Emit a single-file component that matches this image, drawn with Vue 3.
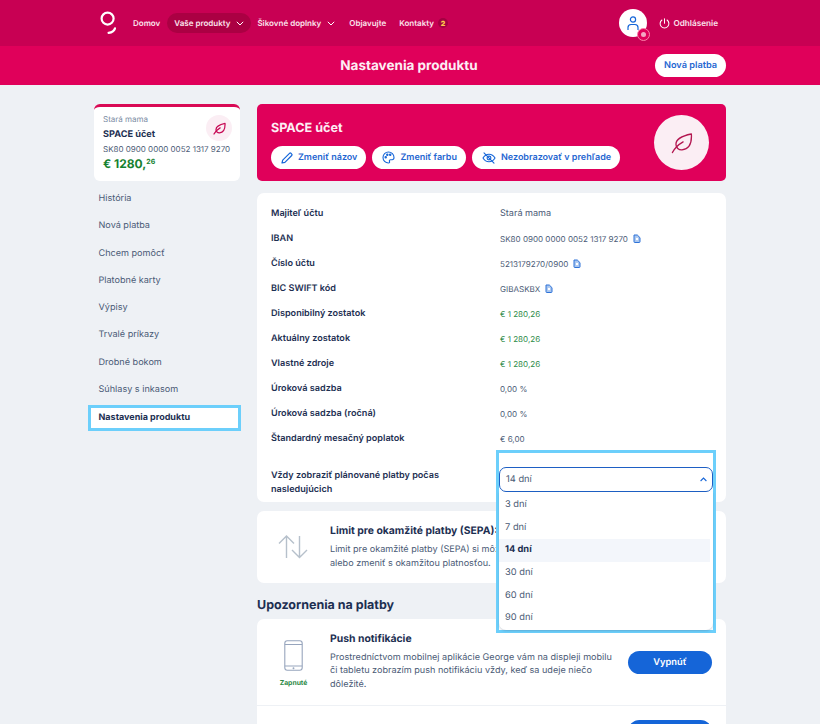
<script setup>
const nav = ['História','Nová platba','Chcem pomôcť','Platobné karty','Výpisy','Trvalé príkazy','Drobné bokom','Súhlasy s inkasom']
const details = [
  { label: 'Majiteľ účtu', value: 'Stará mama', kind: 'owner' },
  { label: 'IBAN', value: 'SK80 0900 0000 0052 1317 9270', copy: true },
  { label: 'Číslo účtu', value: '5213179270/0900', copy: true },
  { label: 'BIC SWIFT kód', value: 'GIBASKBX', copy: true },
  { label: 'Disponibilný zostatok', value: '€ 1 280,26', kind: 'green' },
  { label: 'Aktuálny zostatok', value: '€ 1 280,26', kind: 'green' },
  { label: 'Vlastné zdroje', value: '€ 1 280,26', kind: 'green' },
  { label: 'Úroková sadzba', value: '0,00 %' },
  { label: 'Úroková sadzba (ročná)', value: '0,00 %' },
  { label: 'Štandardný mesačný poplatok', value: '€ 6,00' }
]
const options = ['3 dní','7 dní','14 dní','30 dní','60 dní','90 dní']
</script>

<template>
  <div class="page">
    <header class="topbar">
      <div class="wrap topbar-in">
        <svg class="logo" width="16" height="24" viewBox="0 0 16 24" fill="none" stroke="#fff" stroke-width="2.200">
          <circle cx="7.600" cy="7.600" r="6"/>
          <path d="M15 17.400c-.7 2.400-3 3.900-6.400 4.500" stroke-linecap="round"/>
        </svg>
        <nav class="mainnav">
          <span class="mi home">Domov</span>
          <span class="mi active">Vaše produkty
            <svg width="8" height="5" viewBox="0 0 8 5" fill="none" stroke="#fff" stroke-width="1"><path d="M.8.8 4 4l3.200-3.200"/></svg>
          </span>
          <span class="mi tools">Šikovné doplnky
            <svg width="8" height="5" viewBox="0 0 8 5" fill="none" stroke="#fff" stroke-width="1"><path d="M.8.8 4 4l3.200-3.200"/></svg>
          </span>
          <span class="mi explore">Objavujte</span>
          <span class="mi">Kontakty <b class="count">2</b></span>
        </nav>
        <div class="avatar">
          <svg width="12" height="15" viewBox="0 0 12 15" fill="none" stroke="#1565d8" stroke-width="1.200"><circle cx="6" cy="3.500" r="2.600"/><path d="M1 14v-2.400C1 9.800 2.300 8.500 4 8.500h4c1.700 0 3 1.300 3 3.100V14"/></svg>
          <span class="avatar-badge"><span class="avatar-dot"></span></span>
        </div>
        <span class="logout">
          <svg width="11" height="11" viewBox="0 0 12 12" fill="none" stroke="#fff" stroke-width="1.100" stroke-linecap="round"><path d="M6 .8v5"/><path d="M3.200 2.200a4.800 4.800 0 1 0 5.600 0"/></svg>
          Odhlásenie
        </span>
      </div>
    </header>

    <div class="titlebar">
      <div class="wrap titlebar-in">
        <h1>Nastavenia produktu</h1>
        <button class="pill new-pay">Nová platba</button>
      </div>
    </div>

    <div class="wrap content">
      <aside class="side">
        <div class="acct">
          <div class="acct-owner">Stará mama</div>
          <div class="acct-name">SPACE účet</div>
          <div class="acct-iban">SK80 0900 0000 0052 1317 9270</div>
          <div class="acct-bal">€ 1280,<sup>26</sup></div>
          <span class="acct-icon">
            <svg width="13" height="13" viewBox="0 0 20 20" fill="none" stroke="#c70a55" stroke-width="1.900" stroke-linecap="round" stroke-linejoin="round"><path d="M18.500 2.200C18.800 9 17 16 10 16.600c-3 .2-5.400-1.800-5.400-5 0-6 8-8 13.900-9.400Z"/><path d="M1.500 18.500c2-4 5-7 9.500-9.500"/></svg>
          </span>
        </div>
        <ul class="sidenav">
          <li v-for="n in nav" :key="n">{{ n }}</li>
          <li class="current">Nastavenia produktu</li>
        </ul>
      </aside>

      <main class="main">
        <section class="hero">
          <div class="hero-left">
            <h2>SPACE účet</h2>
            <div class="hero-btns">
              <button class="pill hb">
                <svg width="12" height="12" viewBox="0 0 12 12" fill="none" stroke="#1565d8" stroke-width="1.200" stroke-linejoin="round"><path d="M1 11l.7-2.900L8.500 1.300a1 1 0 0 1 1.400 0l.8.8a1 1 0 0 1 0 1.400L3.900 10.300 1 11Z"/></svg>
                Zmeniť názov
              </button>
              <button class="pill hb">
                <svg width="13" height="13" viewBox="0 0 13 13" fill="none" stroke="#1565d8" stroke-width="1.100"><path d="M6.500 1C3.400 1 1 3.400 1 6.500S3.400 12 6.500 12c1.100 0 1.300-.8 1-1.500-.4-.9.100-1.800 1.100-1.800h1.500c1.300 0 1.900-1 1.900-2.200C12 3.400 9.600 1 6.500 1Z"/><circle cx="3.700" cy="6.200" r=".7"/><circle cx="5.300" cy="3.800" r=".7"/><circle cx="8.200" cy="3.800" r=".7"/></svg>
                Zmeniť farbu
              </button>
              <button class="pill hb">
                <svg width="14" height="12" viewBox="0 0 14 12" fill="none" stroke="#1565d8" stroke-width="1.100" stroke-linecap="round"><path d="M1 6s2.200-3.800 6-3.800S13 6 13 6s-2.200 3.800-6 3.800S1 6 1 6Z"/><circle cx="7" cy="6" r="1.900"/><path d="M2 .8l10 10.400"/></svg>
                Nezobrazovať v prehľade
              </button>
            </div>
          </div>
          <span class="hero-icon">
            <svg width="22" height="22" viewBox="0 0 20 20" fill="none" stroke="#b31650" stroke-width="1.200" stroke-linecap="round" stroke-linejoin="round"><path d="M18.500 1.800C19 9 17 15.500 10 16.200c-3 .2-5.500-1.800-5.500-5C4.500 5.500 12.500 3 18.500 1.800Z"/><path d="M1.300 18.700c2-4 5-7 9.700-9.700"/></svg>
          </span>
        </section>

        <section class="card details">
          <div v-for="d in details" :key="d.label" class="drow">
            <span class="dl">{{ d.label }}</span>
            <span class="dv" :class="d.kind">{{ d.value }}
              <svg v-if="d.copy" class="copy" width="8" height="9" viewBox="0 0 8 9"><path d="M1 1h3.300l2.700 2.700V7.800a.7.7 0 0 1-.7.7H1.700a.7.7 0 0 1-.7-.7Z" fill="#a9c6ef" stroke="#2f73d8" stroke-width="1"/><circle cx="4" cy="5" r="1.200" fill="#fff"/></svg>
            </span>
          </div>
          <div class="drow select-row">
            <span class="dl sl">Vždy zobraziť plánované platby počas nasledujúcich</span>
            <div class="dropwrap">
              <div class="hl">
                <div class="sel">
                  <span>14 dní</span>
                  <svg width="7" height="5" viewBox="0 0 7 5" fill="none" stroke="#1565d8" stroke-width="1.100"><path d="M.6 4 3.500 1.100 6.400 4"/></svg>
                </div>
                <ul class="opts">
                  <li v-for="o in options" :key="o" :class="{ on: o === '14 dní' }">{{ o }}</li>
                </ul>
              </div>
            </div>
          </div>
        </section>

        <section class="card limit">
          <svg class="arrows" width="30" height="24" viewBox="0 0 30 24" fill="none" stroke="#b6c0cb" stroke-width="1.400"><path d="M8.500 23V1.500M1 8.500l7.500-7.500L16 8.500"/><path d="M21.500 1v21.500M14 15l7.500 7.500L29 15"/></svg>
          <div class="limit-text">
            <h3>Limit pre okamžité platby (SEPA):</h3>
            <p>Limit pre okamžité platby (SEPA) si môžete kedykoľvek nastaviť<br>alebo zmeniť s okamžitou platnosťou.</p>
          </div>
        </section>

        <h2 class="sect">Upozornenia na platby</h2>

        <section class="card push">
          <div class="prow">
            <div class="picon">
              <svg width="19" height="31" viewBox="0 0 19 31" fill="none" stroke="#97a5bd" stroke-width="1.100"><rect x=".8" y=".8" width="17.400" height="29.400" rx="2.500"/><path d="M.8 4.500h17.400M.8 26h17.400"/><circle cx="9.500" cy="28.200" r=".4"/></svg>
              <span class="on-label">Zapnuté</span>
            </div>
            <div class="ptext">
              <h3>Push notifikácie</h3>
              <p>Prostredníctvom mobilnej aplikácie George vám na displeji mobilu či tabletu zobrazím push notifikáciu vždy, keď sa udeje niečo dôležité.</p>
            </div>
            <button class="pill solid">Vypnúť</button>
          </div>
          <div class="prow second">
            <button class="pill solid"></button>
          </div>
        </section>
      </main>
    </div>
  </div>
</template>

<style>
html, body { margin: 0; background: #eef1f5; overflow: hidden; }
</style>

<style scoped>
.page { width: 820px; height: 724px; overflow: hidden; background: #eef1f5; font-family: Inter, "Liberation Sans", sans-serif; color: #2c3d5c; text-rendering: geometricPrecision; }
.wrap { width: 632px; margin: 0 0 0 94px; }
.topbar { height: 46px; background: #c80053; }
.topbar-in { display: flex; align-items: center; height: 46px; color: #fff; }
.logo { margin: 0 17px 0 6px; flex: none; }
.mainnav { display: flex; align-items: center; font-size: 8px; font-weight: 600; color: #fbe3ec; flex: 1; }
.mi { display: inline-flex; align-items: center; gap: 6px; height: 20px; white-space: nowrap; }
.home { margin-right: 7px; }
.active { background: #ab0043; border-radius: 10px; padding: 0 7px 0 7px; margin-right: 6px; }
.tools { margin-right: 14px; }
.explore { margin-right: 13px; }
.count { display: inline-flex; align-items: center; justify-content: center; width: 10px; height: 10px; background: #a40042; color: #ffc94d; border-radius: 50%; font-size: 7px; margin-left: -2px; }
.avatar { width: 28px; height: 28px; background: #fff; border-radius: 50%; position: relative; display: flex; align-items: center; justify-content: center; margin-right: 12px; }
.avatar-badge { position: absolute; right: -3px; bottom: -4px; width: 13px; height: 13px; background: #e0005a; border: 1px solid #fb7fa8; box-sizing: border-box; border-radius: 50%; display: flex; align-items: center; justify-content: center; }
.avatar-dot { width: 5px; height: 5px; background: #f3a6c2; border-radius: 50%; }
.logout { display: flex; align-items: center; gap: 3px; font-size: 8.200px; font-weight: 600; color: #fbe3ec; margin-right: 8px; }

.titlebar { height: 39px; background: #e0005a; }
.titlebar-in { position: relative; display: flex; align-items: center; justify-content: center; height: 39px; }
h1 { margin: 0; font-size: 13.500px; font-weight: 700; color: #fdeef4; position: relative; left: -1px; }
.pill { border: 0; border-radius: 12px; background: #fff; color: #1f66d1; font-family: inherit; font-weight: 600; font-size: 9px; display: inline-flex; align-items: center; justify-content: center; white-space: nowrap; padding: 0; text-rendering: geometricPrecision; }
.new-pay { position: absolute; right: 0; top: 8px; width: 71px; height: 23px; font-size: 9.200px; }

.content { display: flex; align-items: flex-start; padding-top: 19px; }
.side { width: 146px; margin-right: 17px; flex: none; }
.acct { position: relative; height: 77px; background: #fff; border-radius: 6px; border-top: 3px solid #d90a55; box-sizing: border-box; padding: 6px 0 0 9px; }
.acct-owner { font-size: 8px; color: #7a8ba3; line-height: 12px; }
.acct-name { font-size: 9.200px; font-weight: 700; color: #1d2f52; line-height: 16px; margin-top: 2px; }
.acct-iban { font-size: 8px; color: #4a5a75; line-height: 12px; }
.acct-bal { font-size: 12px; font-weight: 700; color: #16812f; line-height: 15px; margin-top: 1px; }
.acct-bal sup { font-size: 7px; vertical-align: 4px; line-height: 0; }
.acct-icon { position: absolute; right: 8px; top: 8px; width: 26px; height: 26px; background: #fbeef4; border-radius: 50%; display: flex; align-items: center; justify-content: center; }

.sidenav { list-style: none; margin: 4px 0 0; padding: 0; }
.sidenav li { font-size: 9.100px; color: #4a5a75; height: 27.300px; line-height: 27.300px; padding-left: 4.500px; white-space: nowrap; }
.sidenav .current { box-sizing: border-box; margin: 2px -1px 0 -6px; padding-left: 7.500px; height: 26px; line-height: 20px; background: #fff; border: 3px solid #6ccffb; font-weight: 700; color: #1d2f52; font-size: 9px; }

.main { width: 469px; flex: none; }
.hero { height: 77px; background: #e0005a; border-radius: 5px; display: flex; align-items: center; justify-content: space-between; padding: 0 17px 0 14px; box-sizing: border-box; }
.hero-left { padding-top: 5px; }
.hero h2 { margin: 0 0 10px; font-size: 12.600px; font-weight: 700; color: #fdeef4; line-height: 15px; }
.hero-btns { display: flex; gap: 6px; }
.hb { height: 23px; gap: 5px; padding: 0 9px 0 10px; }
.hero-icon { width: 55px; height: 55px; background: #fbeef4; border-radius: 50%; display: flex; align-items: center; justify-content: center; }

.card { background: #fff; border-radius: 7px; }
.details { margin-top: 12px; height: 309px; padding: 8.400px 14px 0; box-sizing: border-box; position: relative; }
.drow { display: flex; align-items: center; height: 25px; }
.dl { width: 229px; font-size: 9.100px; font-weight: 600; color: #1d2f52; flex: none; }
.dv { font-size: 8.050px; color: #4a5a75; display: inline-flex; align-items: center; gap: 5px; }
.dv.owner { font-size: 9.100px; }
.dv.green { color: #2c8a46; }
.select-row { height: auto; margin-top: 15.600px; align-items: flex-start; }
.sl { line-height: 14px; width: 200px; margin-right: 29px; position: relative; top: 2px; }
.dropwrap { position: relative; flex: 1; height: 25px; }
.hl { position: absolute; left: -4px; top: -17px; width: 220px; box-sizing: border-box; height: 183px; border: 3px solid #6ccffb; background: #fff; padding-top: 14px; z-index: 2; }
.sel { box-sizing: border-box; height: 25px; border: 1.500px solid #1e5fc4; border-radius: 7px; display: flex; align-items: center; justify-content: space-between; padding: 0 5px 0 6px; font-size: 9.300px; color: #4a5a75; background: #fff; }
.opts { list-style: none; margin: 0; padding: 2px 0 0; border-radius: 0 0 7px 7px; box-shadow: 0 1px 2px rgba(60, 80, 110, .25); }
.opts li { height: 22.700px; line-height: 22.700px; padding-left: 6px; font-size: 9.300px; color: #4a5a75; }
.opts li.on { background: #f3f6fb; font-weight: 700; color: #1d2f52; margin-right: 3px; }

.limit { margin-top: 9px; height: 72px; display: flex; align-items: center; padding-left: 21px; box-sizing: border-box; }
.arrows { flex: none; margin-right: 22px; }
.limit-text { white-space: nowrap; }
h3 { margin: 0; font-size: 10.400px; font-weight: 700; color: #1d2f52; line-height: 14px; }
.limit-text p { margin: 5px 0 0; font-size: 9.100px; line-height: 13.300px; color: #4a5a75; }
.sect { margin: 15px 0 6px; font-size: 12.500px; line-height: 15px; font-weight: 700; color: #1d2f52; }
.push { overflow: hidden; }
.prow { display: flex; align-items: flex-start; padding: 13px 14px 0 0; height: 87px; box-sizing: border-box; border-bottom: 1px solid #eef1f5; }
.prow.second { border: 0; justify-content: flex-end; }
.picon { width: 73px; flex: none; display: flex; flex-direction: column; align-items: center; padding-top: 8px; }
.on-label { font-size: 6.800px; font-weight: 700; color: #2c8a46; margin-top: 7px; }
.ptext { flex: 1; }
.ptext p { margin: 5px 0 0; font-size: 9.100px; line-height: 13.300px; color: #4a5a75; }
.solid { background: #1565d8; color: #fff; width: 84px; height: 23px; flex: none; margin: 19px 0 0 15px; font-size: 9.300px; }
.second .solid { margin-top: 1px; }
</style>
